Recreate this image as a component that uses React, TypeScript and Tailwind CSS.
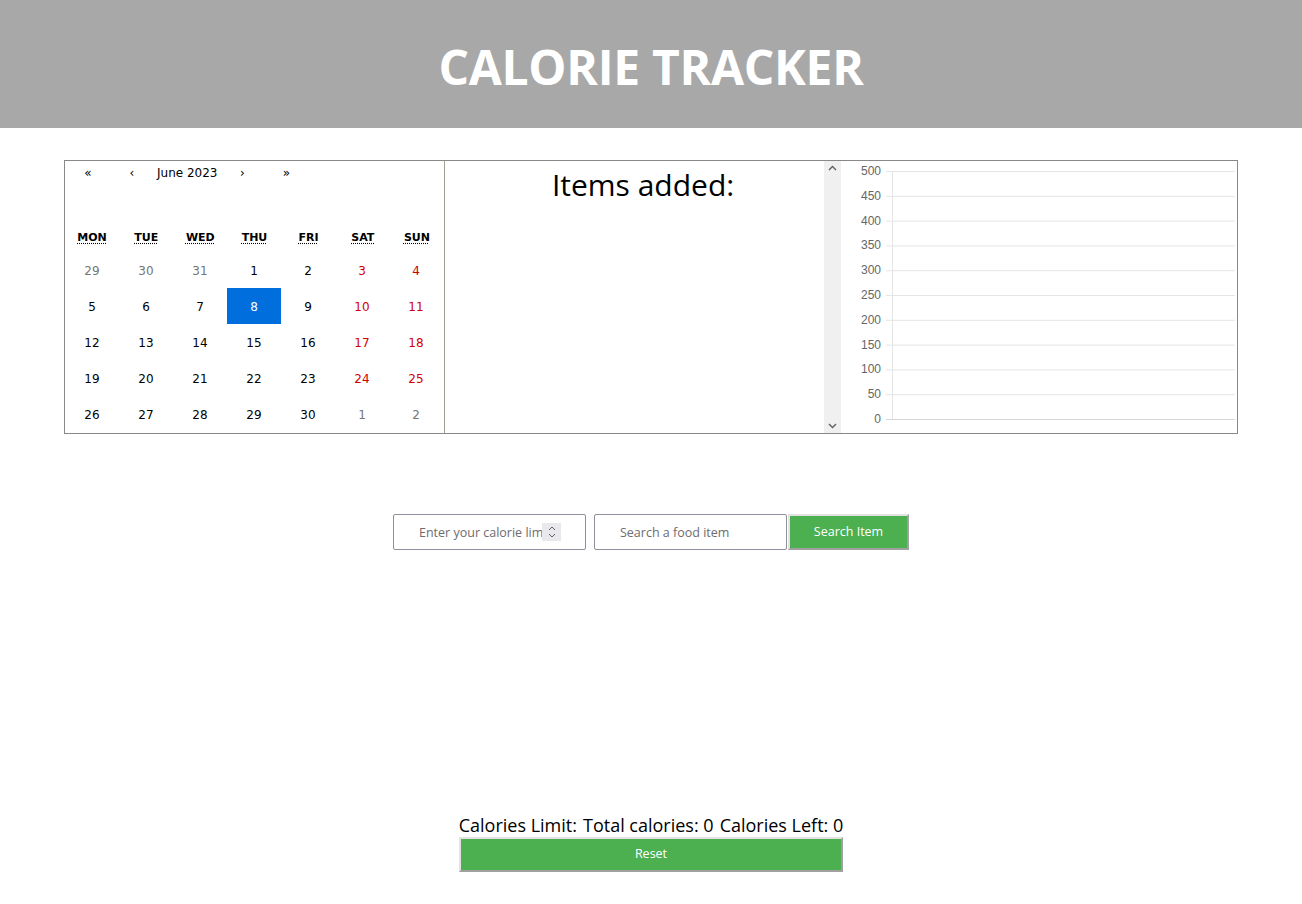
import React from 'react';

const weekdays = ['MON', 'TUE', 'WED', 'THU', 'FRI', 'SAT', 'SUN'];

type Day = { n: number; other?: boolean };

const buildDays = (): Day[] => {
  const days: Day[] = [{ n: 29, other: true }, { n: 30, other: true }, { n: 31, other: true }];
  for (let i = 1; i <= 30; i++) days.push({ n: i });
  days.push({ n: 1, other: true }, { n: 2, other: true });
  return days;
};

const Calendar = () => {
  const days = buildDays();
  return (
    <div className="flex w-[380px] shrink-0 flex-col border-r border-[#a0a096] font-['DejaVu_Sans',sans-serif] text-[12px] text-black">
      <div className="flex h-[24px] items-center pl-[1px]">
        <button className="h-full w-[44px] text-[12px]">«</button>
        <button className="h-full w-[44px] text-[12px]">‹</button>
        <button className="h-full px-[3px] text-[12px]">June 2023</button>
        <button className="h-full w-[44px] text-[12px]">›</button>
        <button className="h-full w-[44px] text-[12px]">»</button>
      </div>
      <div className="mt-[39px] grid h-[28px] grid-cols-7 items-center text-center text-[11px] font-bold">
        {weekdays.map((d) => (
          <abbr key={d} className="underline decoration-dotted underline-offset-2">
            {d}
          </abbr>
        ))}
      </div>
      <div className="grid grid-cols-[repeat(7,54px)]">
        {days.map((d, i) => {
          const col = i % 7;
          const selected = !d.other && d.n === 8;
          let color = 'text-black';
          if (d.other) color = 'text-[#757575]';
          else if (col >= 5) color = 'text-[#d10000]';
          if (selected) color = 'bg-[#006edc] text-white';
          return (
            <div key={i} className={`flex h-[36px] items-center justify-center pt-[1px] ${color}`}>
              {d.n}
            </div>
          );
        })}
      </div>
    </div>
  );
};

const Chevron = ({ up }: { up?: boolean }) => (
  <svg width="9" height="6" viewBox="0 0 9 6">
    <path
      d={up ? 'M1 5 L4.5 1.5 L8 5' : 'M1 1 L4.5 4.5 L8 1'}
      fill="none"
      stroke="#606060"
      strokeWidth="1.4"
    />
  </svg>
);

const ItemsPanel = () => (
  <div className="flex flex-1">
    <div className="-mr-[17px] flex-1 pt-[4px] text-center font-['Open_Sans',sans-serif] text-[30px] leading-[40px] text-black">
      Items added:
    </div>
    <div className="flex w-[17px] flex-col items-center justify-between bg-[#f0f0f0] py-[4px]">
      <Chevron up />
      <Chevron />
    </div>
  </div>
);

const Chart = () => {
  const ticks = [500, 450, 400, 350, 300, 250, 200, 150, 100, 50, 0];
  const top = 10;
  const bottom = 258;
  const step = (bottom - top) / 10;
  return (
    <div className="w-[396px] shrink-0">
      <svg width="396" height="272" className="font-['Liberation_Sans',sans-serif]">
        {ticks.map((t, i) => {
          const y = top + i * step;
          return (
            <g key={t}>
              <line x1="45" x2="394" y1={y + 0.5} y2={y + 0.5} stroke="#e5e5e5" strokeWidth="1" />
              <text x="40" y={y + 4} textAnchor="end" fontSize="12" fill="#666">
                {t}
              </text>
            </g>
          );
        })}
        <line x1="51.5" x2="51.5" y1={top} y2={bottom + 1} stroke="#e5e5e5" strokeWidth="1" />
        <line x1="45" x2="394" y1={bottom + 0.5} y2={bottom + 0.5} stroke="#d6d6d6" strokeWidth="1" />
      </svg>
    </div>
  );
};

export default function App() {
  return (
    <div className="min-h-screen w-full bg-white font-['Open_Sans',sans-serif]">
      <header className="flex h-[128px] items-center justify-center bg-[#a8a8a8]">
        <h1 className="pt-[6px] text-[48px] font-bold tracking-[-0.3px] text-white">CALORIE TRACKER</h1>
      </header>

      <div className="mx-[64px] mt-[32px] flex h-[274px] border border-[#888]">
        <Calendar />
        <ItemsPanel />
        <Chart />
      </div>

      <div className="mt-[80px] flex justify-center">
        <div className="relative">
          <input
            type="text"
            placeholder="Enter your calorie limit"
            className="h-[36px] w-[193px] rounded-[2px] border border-[#8f8f9d] pl-[25px] pr-[28px] text-[12.5px] text-black placeholder:text-[#6d6d6d] focus:outline-none"
          />
          <div className="absolute right-[25px] top-[9px] flex h-[18px] w-[19px] flex-col items-center justify-center gap-[2px] bg-[#e9e9ed]">
            <svg width="8" height="5" viewBox="0 0 8 5">
              <path d="M1 4 L4 1 L7 4" fill="none" stroke="#606060" strokeWidth="1" />
            </svg>
            <svg width="8" height="5" viewBox="0 0 8 5">
              <path d="M1 1 L4 4 L7 1" fill="none" stroke="#606060" strokeWidth="1" />
            </svg>
          </div>
        </div>
        <input
          type="text"
          placeholder="Search a food item"
          className="ml-[8px] h-[36px] w-[193px] rounded-[2px] border border-[#8f8f9d] pl-[25px] text-[12.5px] text-black placeholder:text-[#6d6d6d] focus:outline-none"
        />
        <button className="ml-[1px] h-[36px] w-[121px] border-2 border-t-[#e3e3e3] border-l-[#e3e3e3] border-r-[#a0a0a0] border-b-[#a0a0a0] bg-[#4caf50] text-[12.5px] text-white">
          Search Item
        </button>
      </div>

      <div className="mt-[263px] flex justify-center">
        <div className="flex flex-col">
          <div className="flex gap-[6px] text-[18px] leading-[24px] text-black">
            <span>Calories Limit:</span>
            <span>Total calories: 0</span>
            <span>Calories Left: 0</span>
          </div>
          <button className="h-[35px] w-full border-2 border-t-[#e3e3e3] border-l-[#e3e3e3] border-r-[#a0a0a0] border-b-[#a0a0a0] bg-[#4caf50] text-[12.5px] text-white">
            Reset
          </button>
        </div>
      </div>
    </div>
  );
}
